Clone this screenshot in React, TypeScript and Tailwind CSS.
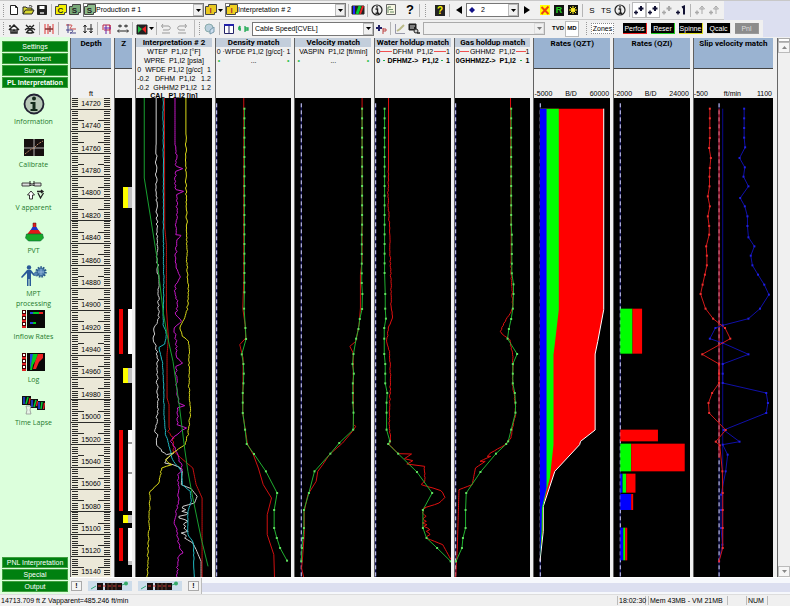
import type { ReactNode } from 'react';

type Pt = [number, number];

// deterministic noise so that the logs look the same on every render
const noise = (n: number) => {
  const s = Math.sin(n * 12.9898) * 43758.5453;
  return (s - Math.floor(s)) * 2 - 1;
};

const parse = (s: string): Pt[] => s.split(' ').map((p) => p.split(',').map(Number) as Pt);

const rough = (s: string, amp: number, from = 0, to = 2000, step = 6) => {
  const pts = parse(s);
  const out: Pt[] = [pts[0]];
  for (let i = 1; i < pts.length; i++) {
    const [ax, ay] = pts[i - 1];
    const [bx, by] = pts[i];
    const n = Math.max(1, Math.round(Math.abs(by - ay) / step));
    for (let k = 1; k <= n; k++) {
      const y = ay + ((by - ay) * k) / n;
      const j = y > from && y < to ? noise(y + ax) * amp : 0;
      out.push([ax + ((bx - ax) * k) / n + j, y]);
    }
  }
  return out.map((p) => p.join(',')).join(' ');
};

const every = (x: number, from: number, to: number) => {
  const out: string[] = [];
  for (let y = from; y <= to; y += 29) out.push(`${x},${y}`);
  return out.join(' ');
};

const Line = ({ pts, color }: { pts: string; color: string }) => (
  <polyline points={pts} fill="none" stroke={color} strokeWidth="1" vectorEffect="non-scaling-stroke" />
);

const Dotted = ({ pts, color, dot }: { pts: string; color: string; dot: string }) => (
  <>
    <Line pts={pts} color={color} />
    {parse(pts).map(([x, y], i) => (
      <rect key={i} x={x - 3} y={y - 3} width="6" height="6" fill={dot} />
    ))}
  </>
);

const Zero = ({ x, from = 26, to = 1447 }: { x: number; from?: number; to?: number }) => (
  <>
    <line x1={x} x2={x} y1={from} y2={to} stroke="#1a1a70" strokeWidth="1" vectorEffect="non-scaling-stroke" />
    <line x1={x} x2={x} y1={from} y2={to} stroke="#d8d8ff" strokeWidth="1" strokeDasharray="4 3" vectorEffect="non-scaling-stroke" />
  </>
);

const Plot = ({ box, children }: { box: string; children: ReactNode }) => (
  <div className="min-h-0 flex-1 bg-black">
    <svg className="block h-full w-full" viewBox={box} preserveAspectRatio="none">
      {children}
    </svg>
  </div>
);

const BlueHead = ({ title, children }: { title: string; children?: ReactNode }) => (
  <div className="flex h-[60px] shrink-0 flex-col justify-between bg-[#f0f0f0]">
    <div className="h-[31px] border-b border-[#444] bg-[#9ab3d1] pt-px text-center font-[Roboto] text-[8px] font-bold">{title}</div>
    <div className="flex justify-between">{children}</div>
  </div>
);

const ListHead = ({ title, children }: { title: string; children: ReactNode }) => (
  <div className="flex h-[60px] shrink-0 flex-col bg-[#f0f0f0]">
    <div className="h-[9px] shrink-0 bg-[#c3cedb] text-center font-[Roboto] text-[8px] font-bold">{title}</div>
    {children}
  </div>
);

const Row = ({ l, r, children }: { l?: string; r?: string; children: ReactNode }) => (
  <div className="flex h-[9px] shrink-0 items-center px-px">
    {l && <span>{l}</span>}
    <span className="flex-1 text-center">{children}</span>
    {r && <span>{r}</span>}
  </div>
);

const Track = ({ children }: { children: ReactNode }) => (
  <section className="flex min-w-0 flex-col overflow-hidden border-l border-[#606060] whitespace-pre">{children}</section>
);

const cells = Array.from({ length: 22 }, (_, i) => 14720 + i * 20);

const DepthTrack = () => (
  <Track>
    <BlueHead title="Depth">
      <span className="w-full text-center">ft</span>
    </BlueHead>
    <div className="grid min-h-0 flex-1 bg-[#ebe8d8]">
      <svg
        className="col-start-1 row-start-1 block h-full w-full"
        viewBox="0 98 40 479"
        preserveAspectRatio="none"
        shapeRendering="crispEdges"
        stroke="#2c2c2a"
      >
        {Array.from({ length: 214 }, (_, i) => {
          const y = 98 + i * 2.238;
          return <path key={i} d={`M1 ${y}h6M33 ${y}h6`} vectorEffect="non-scaling-stroke" />;
        })}
        {cells.map((c, i) => {
          const y = 109 + i * 22.38;
          return <path key={c} d={`M0 ${y}h40M7 ${y - 11.2}h6M27 ${y - 11.2}h6`} vectorEffect="non-scaling-stroke" />;
        })}
      </svg>
      <div className="col-start-1 row-start-1 flex flex-col">
        {cells.map((c, i) => (
          <div
            key={c}
            className={`flex basis-0 items-end justify-center ${i === 0 ? 'grow-[110]' : i === 21 ? 'grow-[204]' : 'grow-[224]'}`}
          >
            <span className="leading-[10px]">{c}</span>
          </div>
        ))}
      </div>
    </div>
  </Track>
);

const zones: [number, number, number, number, string][] = [
  [123, 187, 5, 21, '#ffff00'],
  [128, 187, 4, 21, '#c0c0c0'],
  [119, 309, 4, 45, '#ee0000'],
  [128, 309, 4, 45, '#fff'],
  [123, 368, 5, 15, '#ffff00'],
  [128, 368, 4, 15, '#c0c0c0'],
  [119, 430, 4, 81, '#ee0000'],
  [128, 430, 4, 81, '#fff'],
  [128, 442, 4, 2, '#999'],
  [128, 472, 4, 2, '#999'],
  [123, 515, 5, 8, '#ffff00'],
  [128, 515, 4, 8, '#c0c0c0'],
  [119, 528, 4, 33, '#ee0000'],
  [128, 528, 4, 33, '#fff'],
  [128, 561, 4, 4, '#c0c0c0'],
];

const ZTrack = () => (
  <Track>
    <BlueHead title="Z" />
    <Plot box="115 98 17 479">
      {zones.map(([x, y, w, h, c], i) => (
        <rect key={i} x={x} y={y} width={w} height={h} fill={c} />
      ))}
    </Plot>
  </Track>
);

const InterpretationTrack = () => (
  <Track>
    <ListHead title="Interpretation # 2">
      <Row>{'WTEP  P1,I2 [°F]'}</Row>
      <Row>{'WPRE  P1,I2 [psia]'}</Row>
      <Row l="0" r="1">{'WFDE P1,I2 [g/cc]'}</Row>
      <Row l="-0.2" r="1.2">{'DFHM  P1,I2'}</Row>
      <Row l="-0.2" r="1.2">{'GHHM2 P1,I2'}</Row>
      <div className="text-center leading-[7px] font-bold">{'CAL  P1,I2 [in]'}</div>
    </ListHead>
    <Plot box="18 10 229 1437">
      <Line
        color="#d0d0d0"
        pts={rough(
          '79,10 79,250 82,400 82,480 86,560 86,680 75,700 70,730 80,765 84,790 82,870 86,920 80,980 75,1010 82,1020 78,1045 92,1065 110,1080 130,1075 110,1095 105,1105 130,1110 150,1118 158,1130 155,1170 185,1182 203,1205 195,1225 160,1235',
          3,
          150,
          1080,
        )}
      />
      <Line color="#d0d0d0" pts={rough('160,1235 165,1330 190,1345 200,1365 215,1400 215,1447', 14, 1236, 1330, 5)} />
      <Line
        color="#20b8c0"
        pts={rough('100,10 101,400 102,560 100,690 108,710 110,720 105,748 88,758 92,780 98,800 102,880 103,960 108,1020 120,1060 128,1095 155,1130 158,1170 182,1190 185,1220 175,1250 175,1320 192,1345 194,1447', 1)}
      />
      <Line
        color="#c81010"
        pts={rough('104,10 105,400 110,450 110,640 116,730 112,780 112,910 118,930 118,1010 130,1030 135,1075 160,1095 190,1120 200,1170 218,1210 218,1447', 6, 1000, 1090)}
      />
      <Line
        color="#c818c8"
        pts={rough('136,10 136,150 141,170 138,215 160,222 138,230 136,260 140,285 160,290 142,300 139,420 155,422 140,435 138,520 152,547 138,570 136,600 146,630 138,660 156,680 134,700 140,750 142,790 158,805 140,815 140,870 148,925 165,933 145,940 143,990 168,1000 140,1020 125,1040 135,1060 150,1100 160,1125 145,1140 147,1210 135,1280 146,1340 158,1375 145,1390 142,1447', 3, 150)}
      />
      <Line
        color="#d8d818"
        pts={rough('169,10 169,250 172,400 172,500 177,600 172,650 150,700 160,725 178,740 178,870 182,960 175,1020 165,1050 130,1075 105,1095 125,1110 95,1120 88,1165 60,1190 58,1280 55,1360 52,1447', 2, 120)}
      />
      <Line
        color="#18a030"
        pts="43,10 43,250 80,480 100,650 112,720 130,800 150,940 165,1060 175,1130 190,1210 215,1330 236,1415"
      />
    </Plot>
  </Track>
);

const GreenDots = () => (
  <div className="flex h-[9px] shrink-0 justify-between px-[2px]">
    <span className="text-[#30c050]">•</span>
    <span>...</span>
    <span className="text-[#30c050]">•</span>
  </div>
);

const DensityTrack = () => (
  <Track>
    <ListHead title="Density match">
      <Row l="0" r="1">{'·WFDE P1,I2 [g/cc]·'}</Row>
      <GreenDots />
    </ListHead>
    <Plot box="257 10 229 1437">
      <Zero x={259} />
      <Line color="#d01010" pts="341,10 341,560 338,640 345,690 347,730 329,750 335,775 339,790 338,955 348,1020 352,1048 370,1080 385,1120 400,1170 425,1210 412,1260 412,1320 432,1380 434,1447" />
      <Dotted
        color="#20b030"
        dot="#60e060"
        pts={`${every(343, 42, 600)} 342,642 346,700 348,733 335,779 340,808 341,837 340,866 338,895 338,924 338,955 345,1005 350,1048 372,1078 408,1130 442,1195 433,1246 433,1300 441,1330 451,1360 472,1398`}
      />
    </Plot>
  </Track>
);

const VelocityTrack = () => (
  <Track>
    <ListHead title="Velocity match">
      <Row>{'VASPIN  P1,I2 [ft/min]'}</Row>
      <GreenDots />
    </ListHead>
    <Plot box="16 10 229 1437">
      <Zero x={35} />
      <Line color="#d01010" pts="219,10 219,500 214,540 214,640 210,690 200,740 182,755 192,775 193,990 200,995 190,1010 160,1045 120,1080 100,1110 85,1130 80,1160 55,1200 44,1250 44,1320 38,1400 36,1420 42,1447" />
      <Dotted
        color="#20b030"
        dot="#60e060"
        pts={`${every(219, 42, 400)} ${every(218, 420, 570)} 220,598 219,643 212,673 208,703 201,732 193,778 190,808 194,837 191,866 191,895 191,924 193,954 192,1005 150,1045 123,1077 75,1130 58,1195 43,1246 43,1300 40,1330 37,1360 35,1400`}
      />
    </Plot>
  </Track>
);

const HoldupHead = ({ title, a, b }: { title: string; a: string; b: ReactNode }) => (
  <ListHead title={title}>
    <div className="flex h-[9px] shrink-0 items-center px-px">
      <span>0</span>
      <span className="h-px flex-1 bg-[#f05050]" />
      <span className="px-px">{a}</span>
      <span className="h-px flex-1 bg-[#f05050]" />
      <span>1</span>
    </div>
    <div className="flex h-[9px] shrink-0 items-center justify-between px-px font-bold">{b}</div>
  </ListHead>
);

const WaterTrack = () => (
  <Track>
    <HoldupHead
      title="Water holdup match"
      a={'DFHM  P1,I2'}
      b={
        <>
          <span>0</span>
          <span className="h-px w-[2px] bg-[#20b050]" />
          <span>{'DFHMZ->  P1,I2'}</span>
          <span className="h-px w-[2px] bg-[#20b050]" />
          <span>1</span>
        </>
      }
    />
    <Plot box="255 10 229 1437">
      <Zero x={257} />
      <Line
        color="#e01010"
        pts={rough('296,10 296,250 294,300 299,400 303,560 304,640 308,670 296,700 290,745 298,770 302,840 300,920 298,990 302,1030 298,1050 325,1077 365,1078 345,1092 370,1098 350,1108 405,1115 405,1160 395,1170 430,1180 455,1188 468,1208 450,1225 402,1240', 1.5, 220)}
      />
      <Line color="#e01010" pts={rough('408,1240 410,1330 460,1350 485,1395', 12, 1240, 1330, 5)} />
      <Dotted
        color="#20b030"
        dot="#60e060"
        pts={`${every(284, 42, 560)} 286,598 286,642 288,672 283,700 283,732 283,778 286,808 286,837 286,866 292,895 290,924 290,954 290,1005 300,1040 295,1048 325,1077 382,1132 428,1195 400,1246 400,1300 411,1330 443,1360 484,1400`}
      />
    </Plot>
  </Track>
);

const GasTrack = () => (
  <Track>
    <HoldupHead
      title="Gas holdup match"
      a={'GHHM2  P1,I2'}
      b={
        <>
          <span>{'0GHHM2Z->  P1,I2'}</span>
          <span className="h-px w-[2px] bg-[#20b050]" />
          <span>1</span>
        </>
      }
    />
    <Plot box="493 10 229 1437">
      <Zero x={495} />
      <Line
        color="#e01010"
        pts={rough('661,10 663,400 663,540 668,640 645,680 630,710 635,718 658,735 668,780 668,870 676,930 676,960 662,1030 645,1050 600,1075 590,1085 600,1085 568,1100 585,1100 555,1120 545,1170 505,1185 500,1360 495,1447', 1.5, 500, 1120)}
      />
      <Dotted
        color="#20b030"
        dot="#60e060"
        pts={`${every(663, 42, 400)} ${every(665, 420, 540)} 670,569 670,598 668,642 663,673 656,703 652,732 681,778 668,808 668,837 668,866 674,895 676,924 676,954 663,1005 654,1040 648,1048 617,1077 570,1132 527,1195 525,1246 525,1300 517,1330 514,1360 496,1400`}
      />
    </Plot>
  </Track>
);

const RatesQZT = () => (
  <Track>
    <BlueHead title="Rates (QZT)">
      <span>-5000</span>
      <span>B/D</span>
      <span className="pr-px">60000</span>
    </BlueHead>
    <Plot box="12 10 229 1437">
      <Zero x={31} />
      <polygon
        points="30,42 223,42 223,645 205,740 197,778 197,1006 153,1040 150,1050 75,1130 40,1235 40,1310 30,1400"
        fill="#f00"
      />
      <polyline
        points="223,42 223,645 205,740 197,778 197,1006 153,1040 150,1050 75,1130 40,1235 40,1310 30,1400"
        fill="none"
        stroke="#fff"
        vectorEffect="non-scaling-stroke"
      />
      <polygon points="30,42 87,42 87,645 76,740 71,780 71,1050 60,1150 48,1195 39,1240 38,1310 30,1390" fill="#0f0" />
      <polygon points="30,42 50,42 50,1180 36,1240 35,1310 30,1390" fill="#00f" />
    </Plot>
  </Track>
);

const inflow: [number, number, number, number, string][] = [
  [270, 642, 37, 135, '#0f0'],
  [307, 642, 29, 135, '#f00'],
  [270, 1005, 114, 35, '#f00'],
  [270, 1047, 33, 83, '#0f0'],
  [303, 1047, 162, 83, '#f00'],
  [270, 1137, 7, 57, '#00f'],
  [277, 1137, 11, 57, '#0f0'],
  [288, 1137, 28, 57, '#f00'],
  [270, 1198, 33, 48, '#00f'],
  [303, 1198, 6, 48, '#f00'],
  [270, 1299, 9, 98, '#00f'],
  [279, 1299, 6, 98, '#0f0'],
  [285, 1299, 6, 98, '#f00'],
];

const RatesQZI = () => (
  <Track>
    <BlueHead title="Rates (QZI)">
      <span>-2000</span>
      <span>B/D</span>
      <span className="pr-px">24000</span>
    </BlueHead>
    <Plot box="251 10 229 1437">
      <Zero x={270} />
      {inflow.map(([x, y, w, h, c], i) => (
        <rect key={i} x={x} y={y} width={w} height={h} fill={c} />
      ))}
    </Plot>
  </Track>
);

const SlipTrack = () => (
  <Track>
    <BlueHead title="Slip velocity match">
      <span>-500</span>
      <span>ft/min</span>
      <span className="pr-px">1100</span>
    </BlueHead>
    <Plot box="490 10 240 1437">
      <Zero x={566} />
      <Line color="#0a0a90" pts="577,42 577,1350" />
      <Line color="#e01818" pts="566,42 566,1090" />
      <Dotted
        color="#1010a8"
        dot="#2020e0"
        pts={`${every(642, 42, 130)} 645,158 628,190 644,218 640,246 655,275 630,310 644,335 652,365 652,394 655,428 673,455 662,483 667,512 684,540 703,570 717,600 690,642 655,672 577,692 555,700 538,732 577,745 655,779 577,808 577,837 577,865 709,895 714,925 709,955 580,1006 628,1041 577,1050 592,1080 586,1130 572,1200 572,1246 572,1300 576,1350 566,1400`}
      />
      <Dotted
        color="#d01818"
        dot="#f03030"
        pts="538,42 538,71 538,100 538,130 536,160 541,190 538,220 537,246 537,275 532,305 538,335 532,365 536,394 536,420 527,455 529,483 529,512 523,540 516,570 510,598 525,642 548,672 584,700 600,732 515,779 566,808 566,837 566,865 545,895 534,925 536,955 586,1006 556,1041 568,1052 576,1130 577,1195 577,1246 577,1300 577,1360 566,1400"
      />
    </Plot>
  </Track>
);

/* ---------- toolbar ---------- */

const Glyph = ({ children }: { children: ReactNode }) => (
  <svg className="block h-[14px] w-[14px] shrink-0" viewBox="0 0 14 14" fill="none" stroke="#222" strokeWidth="1">
    {children}
  </svg>
);

const Tool = ({ name, down, children }: { name: string; down?: boolean; children: ReactNode }) => (
  <button
    type="button"
    aria-label={name}
    className={`flex h-[16px] w-[14px] shrink-0 items-center justify-center ${down ? 'border border-[#bbb] bg-white' : ''}`}
  >
    {children}
  </button>
);

const Sep = () => <span className="mx-[2px] h-[13px] w-px shrink-0 bg-[#b5b5b5]" />;
const Grip = () => <span className="mx-[3px] h-[13px] w-px shrink-0 border-l border-dotted border-[#999]" />;

const Info = () => (
  <>
    <circle cx="7" cy="7" r="5" fill="#eee" strokeWidth="1.2" />
    <path d="M5.5 6h2v4M5.5 10.3h3.6" strokeWidth="1.4" />
    <rect x="6.2" y="3.2" width="1.6" height="1.4" fill="#111" stroke="none" />
  </>
);

const Badge = ({ c, t, ink = '#222' }: { c: string; t: string; ink?: string }) => (
  <svg className="block h-[12px] w-[12px] shrink-0" viewBox="0 0 12 12">
    <path d="M3.500 0.500h8v8h-2v2h-9v-8h3z" fill={c} stroke="#444" strokeWidth="1" />
    <text x="5.5" y="9" fontSize="8" fontWeight="bold" textAnchor="middle" fill={ink}>
      {t}
    </text>
  </svg>
);

const Drop = ({ label, value, icon, box, field }: { label: string; value: string; icon?: ReactNode; box: string; field: string }) => (
  <label className={`relative flex h-[14px] shrink-0 items-center border border-[#777] bg-white ${box}`}>
    {icon}
    <select aria-label={label} className={`h-[12px] w-full appearance-none bg-transparent text-[7px] leading-[12px] outline-none ${field}`}>
      <option>{value}</option>
    </select>
    <span className="pointer-events-none absolute top-0 right-0 flex h-[12px] w-[10px] items-center justify-center border border-[#bbb] bg-[#f0f0f0]">
      <Caret />
    </span>
  </label>
);

const Caret = () => (
  <svg className="h-[3px] w-[5px] shrink-0" viewBox="0 0 5 3">
    <path d="M0 0h5L2.5 3z" />
  </svg>
);

// small marker with a plus, a figure one or a lifted arrow beside it
const Nudge = ({ ink, v = 0 }: { ink: string; v?: number }) => (
  <Glyph>
    <path d="M2 9.500h4M4 7.500v4" stroke={ink} strokeWidth="1.5" />
    {v === 0 && <path d="M6.500 5.500h5M9 3v5" stroke={ink} strokeWidth="2" />}
    {v === 1 && <path d="M8 4.500l2-1v8" stroke={ink} strokeWidth="2" />}
    {v === 2 && <path d="M9 11V3M6.500 6L9 3l2.500 3z" stroke={ink} />}
  </Glyph>
);

const MainBar = () => (
  <div className="flex h-[19px] w-fit items-center border-b border-b-[#c8c8c8] bg-[#f0f0f0] pr-[3px]">
    <Grip />
    <Tool name="New"><Glyph><path d="M3.500 2.500h5l2 2v7h-7zM8.500 2.500v2h2" fill="#fff" /></Glyph></Tool>
    <Tool name="Open"><Glyph><path d="M2 11V4h3l1 1h5v2M2 11l2.500-4H13l-2 4z" fill="#d8d830" /><path d="M8 3c2-1 3 0 3 1" /></Glyph></Tool>
    <Tool name="Save"><Glyph><path d="M2.500 2.500h9v9h-9z" fill="#222" /><path d="M4.500 3h5v3h-5z" fill="#fff" stroke="none" /><path d="M5 9h4v2H5z" fill="#aaa" stroke="none" /></Glyph></Tool>
    <Sep />
    <Tool name="Company"><Badge c="#f4f000" t="C" /></Tool>
    <Tool name="Survey"><Badge c="#79a878" t="S" /></Tool>
    <Drop label="Survey list" value="Production # 1" icon={<Badge c="#8dbb8a" t="S" />} box="ml-px w-[121px]" field="flex-1" />
    <Tool name="Interpretations"><Badge c="#e8c820" t="I" ink="#a33" /></Tool>
    <Caret />
    <Drop label="Interpretation list" value="Interpretation # 2" icon={<Badge c="#f0d020" t="I" ink="#a33" />} box="ml-[2px] w-[121px]" field="flex-1" />
    <Sep />
    <Tool name="Palette"><Glyph><path d="M1 3h12v8H1z" fill="#222" /><path d="M3 3v8" stroke="#22f" strokeWidth="2" /><path d="M6 11l3-8" stroke="#0c3" strokeWidth="3" /><path d="M9 11l3-8" stroke="#e22" strokeWidth="2" /></Glyph></Tool>
    <Sep />
    <Tool name="Info"><Glyph><Info /></Glyph></Tool>
    <Tool name="Log list"><Glyph><path d="M2.500 1.500h9v10h-9z" fill="#f6f6e0" stroke="#666" /><path d="M4 4h3M5 6.500h4M6 9h4M4 4v6" stroke="#686" /></Glyph></Tool>
    <span className="w-[5px]" />
    <Tool name="Help"><span className="font-[Liberation_Sans] text-[13px] leading-[14px] font-bold">?</span></Tool>
    <Sep />
    <Grip />
    <span className="w-[4px]" />
    <Tool name="Query"><span className="h-[11px] w-[10px] bg-[#222] text-[10px] leading-[11px] font-bold text-[#f6f000]">?</span></Tool>
    <Sep />
    <Tool name="Previous"><Glyph><path d="M10 3v8L4 7z" fill="#000" stroke="none" /></Glyph></Tool>
    <Drop
      label="Step"
      value="2"
      icon={<svg className="ml-[2px] h-[6px] w-[6px] shrink-0" viewBox="0 0 6 6"><path d="M3 0l3 3-3 3-3-3z" fill="#118" /></svg>}
      box="w-[53px]"
      field="pl-[6px]"
    />
    <Tool name="Next"><Glyph><path d="M5 3v8l6-4z" fill="#000" stroke="none" /></Glyph></Tool>
    <span className="w-[5px]" />
    <Tool name="Remove"><Glyph><path d="M2 2h10v10H2z" fill="#ff0" stroke="none" /><path d="M3.500 4l7 7M10.500 3.500l-7 7.500" stroke="#e41" strokeWidth="2" /></Glyph></Tool>
    <Tool name="Rates"><span className="h-[11px] w-[10px] bg-[#111] text-[9px] leading-[11px] font-bold text-[#2c2]">R</span></Tool>
    <Tool name="Light"><Glyph><path d="M2 2h10v10H2z" fill="#111" stroke="none" /><path d="M7 3v8M3 7h8M4 4l6 6M10 4l-6 6" stroke="#fe2" /><circle cx="7" cy="7" r="2" fill="#fe2" stroke="none" /></Glyph></Tool>
    <Sep />
    <Tool name="S"><span className="text-[8px]">S</span></Tool>
    <Tool name="TS"><span className="text-[8px]">TS</span></Tool>
    <Tool name="Station info"><Glyph><Info /></Glyph></Tool>
    <Sep />
    <Tool name="Shift" down><Nudge ink="#113" /></Tool>
    <Tool name="Shift all" down><Nudge ink="#113" /></Tool>
    <Tool name="Swap"><Nudge ink="#a8a8a8" /></Tool>
    <Tool name="Single"><Nudge ink="#113" v={1} /></Tool>
    <Sep />
    <Tool name="Lift"><Nudge ink="#aaa" v={2} /></Tool>
    <Tool name="Lift zone"><Nudge ink="#aaa" v={2} /></Tool>
  </div>
);

const Tag = ({ text, corner, tone = 'bg-black text-white' }: { text: string; corner: string; tone?: string }) => (
  <button
    type="button"
    className={`mr-[4px] flex h-[11px] w-[24px] shrink-0 items-center justify-center border-r border-b text-[7px] leading-[9px] ${corner} ${tone}`}
  >
    {text}
  </button>
);

const ToolsBar = () => (
  <div className="flex h-[17px] w-fit items-center bg-[#f0f0f0]">
    <Grip />
    <Tool name="Home log"><Glyph><path d="M2 8l5-5 5 5M4 7v4h6V7M6 11V8h2v3M3 3v2" strokeWidth="1.5" /></Glyph></Tool>
    <span className="w-[2px]" />
    <Tool name="Reset log"><Glyph><path d="M2 8l5-4 5 4M3 3l8 8M11 3L3 11M5 8h4v3H5z" strokeWidth="1.3" /></Glyph></Tool>
    <Sep />
    <Tool name="Stretch"><Glyph><path d="M3 2v10M6 2v10M11 2v10" stroke="#d33" /><path d="M3 7h8M8 4v6" stroke="#833" strokeWidth="1.3" /></Glyph></Tool>
    <Sep />
    <span className="w-[3px]" />
    <Tool name="Splice"><Glyph><path d="M2 3h5c3 0-3 4 0 4h5" stroke="#c44" /><path d="M2 8h6c2 0 0 3-2 3h6M4 2v9" stroke="#448" /></Glyph></Tool>
    <span className="w-[3px]" />
    <Tool name="Align depth"><Glyph><path d="M4 3v8M2.500 5L4 3l1.500 2M2.500 9L4 11l1.500-2M10 2v9M8.500 9l1.500 2 1.500-2M6 7h6" /></Glyph></Tool>
    <Sep />
    <Tool name="Flag"><Glyph><path d="M3 8V3h7v5H4M10 3v9" stroke="#b24" /><path d="M6 3v9M4 6h7" stroke="#62a" /></Glyph></Tool>
    <span className="w-[2px]" />
    <Tool name="Spread"><Glyph><path d="M2 4h4M8 4h4M2 9h10M3 7.500L1.500 9 3 10.500M11 7.500L12.500 9 11 10.500M4 2.500v3M10 2.500v3" /></Glyph></Tool>
    <Sep />
    <Tool name="Match"><Glyph><path d="M2 3h10v9H2z" fill="#222" /><path d="M3 4l4 3-4 4z" fill="#2b4" stroke="none" /><path d="M11 4L7 7l4 4z" fill="#e22" stroke="none" /></Glyph></Tool>
    <Caret />
    <Sep />
    <Tool name="Undo"><Glyph><path d="M4 2L2.500 4 4 6M3 4h6c3 0 3 4 0 4H4M3 11h8" stroke="#999" /></Glyph></Tool>
    <span className="w-[2px]" />
    <Tool name="Redo"><Glyph><path d="M10 2l1.500 2L10 6M11 4H5c-3 0-3 4 0 4h5M3 11h8" stroke="#999" /></Glyph></Tool>
    <span className="mr-px ml-[5px] h-[17px] w-px bg-[#bbb]" />
    <Grip />
    <Tool name="Globe"><Glyph><circle cx="6" cy="6" r="4" fill="#b9cfdc" stroke="#8aa" /><path d="M7 8l4-3v5l-4 2z" fill="#cde" stroke="#79a" /></Glyph></Tool>
    <Sep />
    <Tool name="Columns"><Glyph><path d="M2.500 2.500h9v9h-9zM7 3v8" stroke="#226" fill="#fff" /><path d="M2 3h10" stroke="#22a" strokeWidth="2" /></Glyph></Tool>
    <Tool name="Refresh"><Glyph><path d="M2 7h3M4 4v5M4 4L2.500 6M9 4v6M9 6h3V8H9" stroke="#2a5" strokeWidth="1.300" /></Glyph></Tool>
    <Drop label="Log channel" value="Cable Speed[CVEL]" box="ml-[2px] w-[122px]" field="pl-[2px]" />
    <Tool name="Mark log"><Glyph><path d="M2 6h6M5 3v6" stroke="#226" strokeWidth="2" /><path d="M9 6v6M9 7h3v2H9" stroke="#b44" /></Glyph></Tool>
    <Sep />
    <Tool name="Chart"><Glyph><path d="M2.500 2v9.500H12" stroke="#99a" /><path d="M4 9l3-2 4-4" stroke="#bb8" strokeWidth="2" /></Glyph></Tool>
    <Tool name="Find in log"><Glyph><path d="M2 2h7v6H2z" fill="#222" /><path d="M3 4h5M3 6h4" stroke="#ddd" /><circle cx="9" cy="9" r="2" fill="#ccc" /><path d="M10 11h3" strokeWidth="1.500" /></Glyph></Tool>
    <label className="relative ml-[2px] flex h-[13px] w-[122px] items-center border border-[#aaa] bg-[#f0f0f0]">
      <select aria-label="Zone" disabled className="h-[11px] w-full appearance-none" />
      <span className="absolute top-0 right-0 flex h-[11px] w-[10px] items-center justify-center border border-[#ccc] opacity-50"><Caret /></span>
    </label>
    <span className="w-[6px]" />
    <Tool name="True vertical depth"><span className="text-[6px] font-bold">TVD</span></Tool>
    <Tool name="Measured depth" down><span className="text-[6px] font-bold">MD</span></Tool>
    <span className="w-[4px]" />
    <Grip />
    <button type="button" className="mr-[9px] ml-px flex h-[11px] w-[23px] shrink-0 items-center justify-center border border-dotted border-[#888] bg-white text-[7px] leading-[9px]">
      Zones
    </button>
    <Tag text="Perfos" corner="border-[#e22]" />
    <Tag text="Reser" corner="border-[#2c2]" />
    <Tag text="Spinne" corner="border-[#dd2]" />
    <Tag text="Qcalc" corner="border-[#ddd]" />
    <Tag text="Pnl" corner="border-[#999]" tone="bg-[#8c8c8c] text-[#ddd]" />
  </div>
);

/* ---------- side panel ---------- */

const SideButton = ({ children, active }: { children: ReactNode; active?: boolean }) => (
  <button
    type="button"
    className={`mx-[2px] h-[11px] shrink-0 border border-[#3f9f3f] bg-[#008010] text-[7px] leading-[9px] whitespace-nowrap text-white ${active ? 'font-bold' : ''}`}
  >
    {children}
  </button>
);

const SideItem = ({ label, children }: { label: string; children: ReactNode }) => (
  <button type="button" className="flex h-[43px] shrink-0 flex-col items-center">
    <svg className="block h-[22px] w-[26px] shrink-0" viewBox="0 0 26 22">{children}</svg>
    <span className="mt-[2px] w-[44px] font-['Open_Sans'] text-[7px] leading-[10px] text-[#1c7a2c]">{label}</span>
  </button>
);

const Reels = () => (
  <>
    <path d="M1 2h4v18H1z" fill="#400" />
    <path d="M2 3h2v2H2zM2 9h2v2H2zM2 15h2v2H2z" fill="#fff" />
    <path d="M1 6h4v2H1zM1 12h4v2H1zM1 18h4v2H1z" fill="#d22" />
  </>
);

const SidePanel = () => (
  <aside className="flex w-[70px] shrink-0 flex-col gap-px bg-[#dcffdc] pt-[4px]">
    <SideButton>Settings</SideButton>
    <SideButton>Document</SideButton>
    <SideButton>Survey</SideButton>
    <SideButton active>PL Interpretation</SideButton>
    <div className="flex flex-1 flex-col items-stretch pt-[4px] pr-[3px]">
      <SideItem label="Information">
        <circle cx="13" cy="11" r="9.500" fill="#b8c8b8" stroke="#223" strokeWidth="1.800" />
        <circle cx="13" cy="5.500" r="2" fill="#142a1c" />
        <path d="M9.500 9h5v7h2v2h-7v-2h2v-5h-2z" fill="#142a1c" />
      </SideItem>
      <SideItem label="Calibrate">
        <path d="M3 3h20v17H3z" fill="#161010" />
        <path d="M13 3v17M3 12h20" stroke="#ddd" strokeWidth="0.800" />
        <path d="M4 18l5-4 4-2 4-4 5-3" stroke="#b86" fill="none" strokeDasharray="2 1" />
      </SideItem>
      <SideItem label="V apparent">
        <path d="M1 4h7l3 1 3-1h6v3h-6l-3-1-3 1H1z" fill="#ddd" stroke="#333" strokeWidth="0.900" />
        <path d="M9 2v5M13 2v5" stroke="#222" />
        <path d="M8.500 20v-4H6.500L10 12l3.500 4h-2v4z" fill="#fff" stroke="#222" strokeWidth="0.900" />
        <path d="M16 12.500h6M20 11l2 1.500-2 1.500M17 14l2.500 5 3-5" stroke="#222" strokeWidth="1.300" fill="none" />
      </SideItem>
      <SideItem label="PVT">
        <path d="M12 1h3v5h-3z" fill="#d22" stroke="#500" strokeWidth="0.500" />
        <path d="M11.500 5h4l2.500 4H9z" fill="#2233c8" />
        <path d="M9.500 8h8l4 5h-16z" fill="#e01818" />
        <path d="M5.500 12h16l1 4-3 3h-12l-3-3z" fill="#18a828" stroke="#063" strokeWidth="0.600" />
      </SideItem>
      <SideItem label="MPT processing">
        <circle cx="8" cy="2.500" r="2.200" fill="#2a5a98" />
        <path d="M6 5h4l4 5-1 1-3-3v13H8.500v-7h-1v7H6V8l-5 5-1-1z" fill="#2a5a98" />
        <circle cx="20" cy="7" r="4.500" fill="#5484b4" stroke="#2a5a88" strokeWidth="2.500" strokeDasharray="1.500 1" />
        <circle cx="15" cy="9" r="2" fill="#5484b4" stroke="#2a5a88" strokeDasharray="1 1" />
        <path d="M17 7h6M20 4v6" stroke="#9bd" strokeWidth="0.800" />
      </SideItem>
      <SideItem label="Inflow Rates">
        <Reels />
        <path d="M6 2h18v18H6z" fill="#080808" />
        <path d="M9 4h4v2H9zM9 14h3v2H9z" fill="#2244e0" />
        <path d="M12 4h6v2h-6zM12 14h3v2h-3z" fill="#0c2" />
        <path d="M18 4h4v2h-4z" fill="#e22" />
      </SideItem>
      <SideItem label="Log">
        <Reels />
        <path d="M6 2h18v18H6z" fill="#080808" />
        <path d="M9 3h4l-2 8-2 8z" fill="#2244e0" />
        <path d="M12 3h5l-2 6-3 5-1 5H9z" fill="#0c2" />
        <path d="M17 3h5v4l-4 4-3 7h-3l2-7z" fill="#e22" />
      </SideItem>
      <SideItem label="Time Lapse">
        <path d="M1 2h9v9H1zM9 5h8v9H9zM16 7h8v9h-8z" fill="#111" />
        <path d="M3 3v7M11 6v7M18 8v7" stroke="#24e" strokeWidth="1.500" />
        <path d="M5 10l2-7M13 13l2-7M20 15l1-7" stroke="#0c3" strokeWidth="1.500" />
        <path d="M8 10l1-6M15.500 12l1-5M22.500 15l1-6" stroke="#e22" strokeWidth="1.300" />
        <path d="M5 12h5l-1 4 1 4H5l1-4z" fill="#e8f4e8" stroke="#888" strokeWidth="0.700" />
      </SideItem>
    </div>
    <SideButton>PNL Interpretation</SideButton>
    <SideButton>Special</SideButton>
    <SideButton>Output</SideButton>
    <span className="h-px shrink-0" />
  </aside>
);

const TabStrip = () => (
  <svg className="block h-[10px] w-[44px]" viewBox="0 0 44 10">
    <path d="M0 0h44v10H0z" fill="#cddcea" />
    <path d="M3 8l5-3M34 4l5-2" stroke="#3a7" />
    <path d="M9 2h6v7H9zM17 2h17v7H17z" fill="#181010" />
    <path d="M10 5h23" stroke="#c33" strokeDasharray="3 2" />
    <path d="M20 2v7M24 2v7M28 2v7" stroke="#643" />
    <circle cx="38" cy="2.500" r="2" fill="#3a6" />
  </svg>
);

const StripButton = ({ name }: { name: string }) => (
  <button type="button" aria-label={name} className="h-[10px] w-[11px] border border-[#aaa] bg-[#f4f4f4] text-[7px] leading-[8px] font-bold">
    !
  </button>
);

const ScrollBar = () => (
  <div className="ml-[4px] flex w-[13px] shrink-0 flex-col border-l border-[#666] bg-[#f0f0f0]">
    <span className="h-[4px] border border-[#aaa] bg-white" />
    <button type="button" aria-label="Scroll up" className="flex h-[11px] items-center justify-center border border-[#bbb] bg-[#f6f6f6]">
      <svg className="h-[3px] w-[5px]" viewBox="0 0 5 3"><path d="M0 3h5L2.500 0z" fill="#888" /></svg>
    </button>
    <span className="flex-1" />
    <button type="button" aria-label="Scroll down" className="flex h-[11px] items-center justify-center border border-[#bbb] bg-[#f6f6f6]">
      <svg className="h-[3px] w-[5px]" viewBox="0 0 5 3"><path d="M0 0h5L2.500 3z" fill="#888" /></svg>
    </button>
  </div>
);

const App = () => (
  <div className="flex h-screen flex-col overflow-hidden bg-[#f0f0f0] font-['Liberation_Sans',sans-serif] text-[7px] leading-[9px] text-black">
    <header className="shrink-0 border-t border-[#c8c8c8] bg-[#dcdff0]">
      <MainBar />
      <ToolsBar />
    </header>
    <main className="flex min-h-0 flex-1">
      <SidePanel />
      <div className="flex min-w-0 flex-1 flex-col">
        <div className="flex min-h-0 flex-1 pt-px">
          <div className="grid min-w-0 flex-1 grid-cols-[82fr_36fr_repeat(7,153fr)_160fr] gap-x-[3px]">
            <DepthTrack />
            <ZTrack />
            <InterpretationTrack />
            <DensityTrack />
            <VelocityTrack />
            <WaterTrack />
            <GasTrack />
            <RatesQZT />
            <RatesQZI />
            <SlipTrack />
          </div>
          <ScrollBar />
        </div>
        <div className="flex h-[17px] shrink-0 border-t border-white bg-[#f6f8fc]">
          <div className="flex items-center gap-[6px] border-r border-[#bbb] bg-[#f0f0f0] pr-[2px] pl-px">
            <StripButton name="Previous view" />
            <TabStrip />
            <TabStrip />
            <StripButton name="Next view" />
          </div>
          <span className="mt-[5px] mb-[2px] flex-1 bg-[#dcdff0]" />
        </div>
      </div>
    </main>
    <footer className="flex h-[12px] shrink-0 items-center border-t border-[#ddd] bg-[#f0f0f0] whitespace-nowrap">
      <span className="flex-1 pl-px">14713.709 ft Z Vapparent=485.246 ft/min</span>
      <span className="w-[29px] border-x border-[#bbb] pl-px">18:02:30</span>
      <span className="ml-[2px] w-[80px] border-x border-[#bbb] pl-px">Mem 43MB - VM 21MB</span>
      <span className="ml-[18px] w-[22px] border-x border-[#bbb] pl-px">NUM</span>
      <span className="w-[22px]" />
    </footer>
  </div>
);

export default App;
